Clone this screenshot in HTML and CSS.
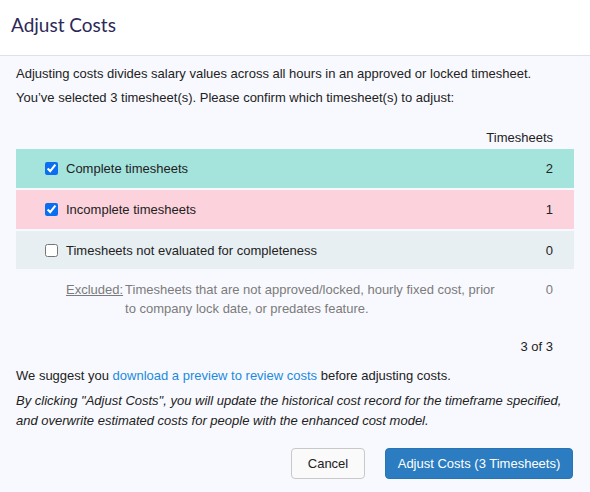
FILE: index.html
```html
<!DOCTYPE html>
<html lang="en">
<head>
  <meta charset="UTF-8">
  <meta name="viewport" content="width=device-width, initial-scale=1.0">
  <title>Adjust Costs</title>
  <link rel="stylesheet" href="styles.css">
</head>
<body>
  <div class="modal">
    <div class="modal-header">
      <h1>Adjust Costs</h1>
    </div>
    <div class="modal-body">
      <p class="intro">Adjusting costs divides salary values across all hours in an approved or locked timesheet.</p>
      <p class="intro">You’ve selected 3 timesheet(s). Please confirm which timesheet(s) to adjust:</p>

      <div class="sheet-table">
        <div class="sheet-head">Timesheets</div>
        <label class="sheet-row complete">
          <span class="sheet-label"><input type="checkbox" checked> Complete timesheets</span>
          <span class="sheet-count">2</span>
        </label>
        <label class="sheet-row incomplete">
          <span class="sheet-label"><input type="checkbox" checked> Incomplete timesheets</span>
          <span class="sheet-count">1</span>
        </label>
        <label class="sheet-row unknown">
          <span class="sheet-label"><input type="checkbox"> Timesheets not evaluated for completeness</span>
          <span class="sheet-count">0</span>
        </label>
        <div class="excluded">
          <span class="excluded-title">Excluded:</span>
          <span class="excluded-text">Timesheets that are not approved/locked, hourly fixed cost, prior to company lock date, or predates feature.</span>
          <span class="excluded-count">0</span>
        </div>
        <div class="sheet-total">3 of 3</div>
      </div>

      <p class="suggest">We suggest you <a href="#">download a preview to review costs</a> before adjusting costs.</p>
      <p class="warning">By clicking "Adjust Costs", you will update the historical cost record for the timeframe specified, and overwrite estimated costs for people with the enhanced cost model.</p>
    </div>
    <div class="modal-footer">
      <button class="btn btn-default">Cancel</button>
      <button class="btn btn-primary">Adjust Costs (3 Timesheets)</button>
    </div>
  </div>
</body>
</html>
```

FILE: styles.css
```css
* {
  margin: 0;
  padding: 0;
  box-sizing: border-box;
}
body {
  font-family: "Liberation Sans", Arial, sans-serif;
  font-size: 13px;
  color: #222;
  background-color: #f8f9fe;
}
.modal {
  width: 590px;
  height: 492px;
  display: flex;
  flex-direction: column;
}
.modal-header {
  height: 56px;
  background-color: #fff;
  border-bottom: 1px solid #dfe0ea;
  display: flex;
  align-items: center;
  padding-left: 11px;
}
.modal-header h1 {
  font-family: Lato, sans-serif;
  font-weight: 400;
  font-size: 19px;
  color: #2d2957;
  margin-top: -7px;
}
.modal-body {
  padding: 9px 16px 0;
}
.intro {
  line-height: 18px;
  margin-bottom: 6px;
}
.sheet-table {
  margin-top: 22px;
  display: flex;
  flex-direction: column;
}
.sheet-head {
  text-align: right;
  padding-right: 21px;
  line-height: 18px;
  margin-bottom: 2px;
}
.sheet-row {
  height: 39px;
  display: flex;
  align-items: center;
  justify-content: space-between;
  padding: 0 21px 0 29px;
  margin-bottom: 2px;
}
.sheet-row.unknown {
  height: 38px;
}
.complete {
  background-color: #a5e4dd;
}
.incomplete {
  background-color: #fcd3dd;
}
.unknown {
  background-color: #e8eff2;
}
.sheet-label {
  display: flex;
  align-items: center;
}
.sheet-label input {
  width: 13px;
  height: 13px;
  margin-right: 8px;
  accent-color: #0b6ef0;
}
.excluded {
  display: grid;
  grid-template-columns: auto 1fr auto;
  column-gap: 2px;
  padding: 0 21px 0 50px;
  margin-top: 9px;
  line-height: 19px;
  color: #7b7b7b;
}
.excluded-title {
  text-decoration: underline;
}
.excluded-text {
  padding-right: 40px;
}
.sheet-total {
  text-align: right;
  padding-right: 21px;
  margin-top: 20px;
  line-height: 18px;
}
.suggest {
  margin-top: 11px;
  line-height: 18px;
}
.suggest a {
  color: #1b8ae0;
  text-decoration: none;
}
.warning {
  margin-top: 6px;
  font-style: italic;
  line-height: 20px;
}
.modal-footer {
  display: flex;
  justify-content: flex-end;
  gap: 20px;
  padding: 17px 17px 0;
}
.btn {
  height: 31px;
  font-family: "Liberation Sans", Arial, sans-serif;
  font-size: 13px;
  border-radius: 4px;
  padding: 0 8px;
  white-space: nowrap;
}
.btn-default {
  width: 74px;
  background-color: #fafafa;
  border: 1px solid #c8c8c8;
  color: #222;
}
.btn-primary {
  width: 188px;
  background-color: #2b7cc0;
  border: 1px solid #2874b5;
  color: #fff;
}
```
